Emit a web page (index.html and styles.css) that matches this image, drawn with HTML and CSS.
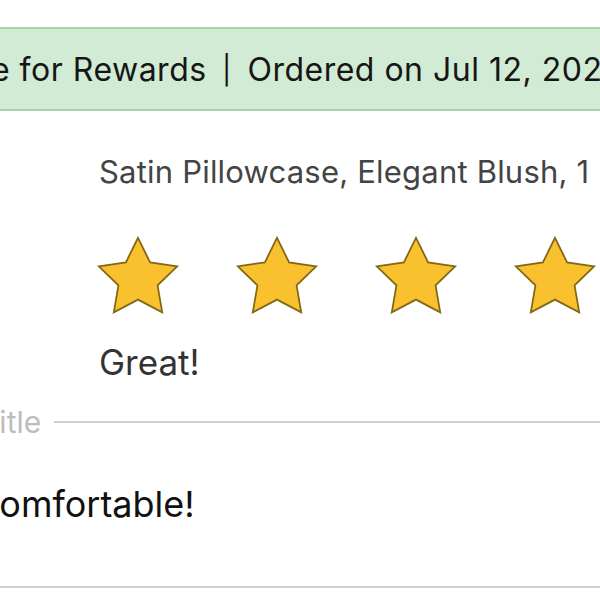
FILE: index.html
```html
<!DOCTYPE html>
<html lang="en">
<head>
  <meta charset="UTF-8" />
  <title>Write a Review</title>
  <link rel="stylesheet" href="styles.css">
</head>
<body>

  <div class="banner">
    <span class="banner-text">Eligible for Rewards <span class="sep">|</span> Ordered on Jul 12, 2024</span>
  </div>

  <div class="product">
    <div class="product-name">Satin Pillowcase, Elegant Blush, 1 Pack</div>

    <div class="stars">
      <svg class="star" viewBox="0 0 24 24"><polygon points="12,2 15.09,8.26 22,9.27 17,14.14 18.18,21.02 12,17.77 5.82,21.02 7,14.14 2,9.27 8.91,8.26" /></svg>
      <svg class="star" viewBox="0 0 24 24"><polygon points="12,2 15.09,8.26 22,9.27 17,14.14 18.18,21.02 12,17.77 5.82,21.02 7,14.14 2,9.27 8.91,8.26" /></svg>
      <svg class="star" viewBox="0 0 24 24"><polygon points="12,2 15.09,8.26 22,9.27 17,14.14 18.18,21.02 12,17.77 5.82,21.02 7,14.14 2,9.27 8.91,8.26" /></svg>
      <svg class="star" viewBox="0 0 24 24"><polygon points="12,2 15.09,8.26 22,9.27 17,14.14 18.18,21.02 12,17.77 5.82,21.02 7,14.14 2,9.27 8.91,8.26" /></svg>
      <svg class="star" viewBox="0 0 24 24"><polygon points="12,2 15.09,8.26 22,9.27 17,14.14 18.18,21.02 12,17.77 5.82,21.02 7,14.14 2,9.27 8.91,8.26" /></svg>
    </div>

    <div class="rating-label">Great!</div>
  </div>

  <div class="field">
    <div class="field-head">
      <span class="field-label">Title</span>
      <div class="field-line"></div>
    </div>
    <div class="field-value">Comfortable!</div>
  </div>

</body>
</html>
```

FILE: styles.css
```css
body {
  margin: 0;
  width: 600px;
  height: 600px;
  overflow: hidden;
  background: #fff;
  font-family: Inter, "Noto Sans", sans-serif;
  color: #333;
}

.banner {
  margin-top: 27px;
  height: 80px;
  display: flex;
  align-items: center;
  background-color: #d2ebd5;
  border-top: 2px solid #a6d2a9;
  border-bottom: 2px solid #a6d2a9;
  white-space: nowrap;
  overflow: hidden;
}

.banner-text {
  margin-left: -102px;
  font-size: 32px;
  letter-spacing: 0.5px;
  color: #161616;
}

.sep {
  margin: 0 6px;
  font-size: 28px;
  position: relative;
  top: -1px;
}

.product {
  padding-left: 99px;
  white-space: nowrap;
}

.product-name {
  margin-top: 42px;
  font-size: 31px;
  letter-spacing: 0.2px;
  color: #444;
}

.stars {
  display: flex;
  gap: 45px;
  margin-top: 40px;
  margin-left: -8px;
}

.star {
  width: 94px;
  height: 94px;
  flex: none;
}

.star polygon {
  fill: #f9c12e;
  stroke: #836715;
  stroke-width: 0.45;
  stroke-linejoin: miter;
}

.rating-label {
  margin-top: 17px;
  font-size: 35px;
  color: #333;
}

.field {
  margin-top: 21px;
  margin-left: -20px;
}

.field-head {
  display: flex;
  align-items: center;
  gap: 13px;
}

.field-label {
  font-size: 30px;
  color: #bdbdbd;
}

.field-line {
  flex: 1;
  height: 2px;
  background: #cfcfcf;
}

.field-value {
  padding: 42px 0 60px;
  text-indent: -7px;
  font-size: 36px;
  color: #111;
  border-bottom: 2px solid #cfcfcf;
}
```
